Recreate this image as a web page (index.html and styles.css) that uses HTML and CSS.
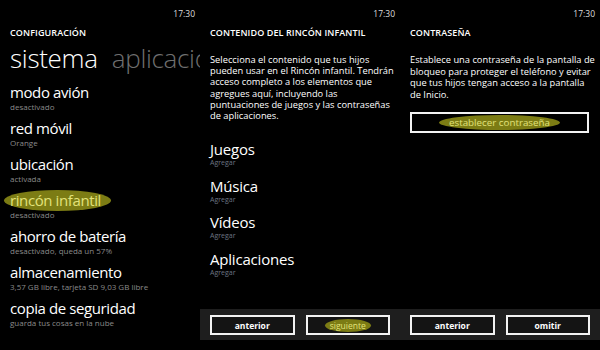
FILE: index.html
```html
<!DOCTYPE html>
<html lang="es">
<head>
<meta charset="utf-8">
<link rel="stylesheet" href="styles.css">
</head>
<body>
<div class="screens">
  <section class="panel">
    <div class="clock">17:30</div>
    <div class="caption">CONFIGURACIÓN</div>
    <div class="pivot"><span class="pivot-on">sistema</span><span class="pivot-off">aplicaciones</span></div>
    <ul class="list">
      <li><div class="title">modo avión</div><div class="sub">desactivado</div></li>
      <li><div class="title">red móvil</div><div class="sub">Orange</div></li>
      <li><div class="title">ubicación</div><div class="sub">activada</div></li>
      <li><div class="title"><span class="mark">rincón infantil</span></div><div class="sub">desactivado</div></li>
      <li><div class="title">ahorro de batería</div><div class="sub">desactivado, queda un 57%</div></li>
      <li><div class="title">almacenamiento</div><div class="sub">3,57 GB libre, tarjeta SD 9,03 GB libre</div></li>
      <li><div class="title">copia de seguridad</div><div class="sub">guarda tus cosas en la nube</div></li>
    </ul>
  </section>

  <section class="panel">
    <div class="clock">17:30</div>
    <div class="caption">CONTENIDO DEL RINCÓN INFANTIL</div>
    <p class="body">Selecciona el contenido que tus hijos<br>pueden usar en el Rincón infantil. Tendrán<br>acceso completo a los elementos que<br>agregues aquí, incluyendo las<br>puntuaciones de juegos y las contraseñas<br>de aplicaciones.</p>
    <ul class="cats">
      <li><div class="cat">Juegos</div><div class="add">Agregar</div></li>
      <li><div class="cat">Música</div><div class="add">Agregar</div></li>
      <li><div class="cat">Vídeos</div><div class="add">Agregar</div></li>
      <li><div class="cat">Aplicaciones</div><div class="add">Agregar</div></li>
    </ul>
    <div class="appbar">
      <button class="btn">anterior</button>
      <button class="btn"><span class="mark mark-sm">siguiente</span></button>
    </div>
  </section>

  <section class="panel">
    <div class="clock">17:30</div>
    <div class="caption">CONTRASEÑA</div>
    <p class="body body-loose">Establece una contraseña de la pantalla de<br>bloqueo para proteger el teléfono y evitar<br>que tus hijos tengan acceso a la pantalla<br>de Inicio.</p>
    <button class="btn btn-wide"><span class="mark mark-md">establecer contraseña</span></button>
    <div class="appbar">
      <button class="btn">anterior</button>
      <button class="btn">omitir</button>
    </div>
  </section>
</div>
</body>
</html>
```

FILE: styles.css
```css
* { box-sizing: border-box; }
html, body {
  margin: 0;
  padding: 0;
  background: #000;
}
body {
  width: 600px;
  height: 350px;
  overflow: hidden;
  font-family: "Open Sans", "Noto Sans", sans-serif;
  color: #fff;
}
.screens {
  display: flex;
  height: 350px;
}
.panel {
  position: relative;
  width: 200px;
  height: 350px;
  overflow: hidden;
  display: flex;
  flex-direction: column;
  padding-left: 10px;
  background: #000;
}
.clock {
  align-self: flex-end;
  padding-right: 5px;
  margin-top: 8px;
  font-size: 8.5px;
  line-height: 12px;
  color: #ddd;
}
.caption {
  margin-top: 7px;
  font-size: 9px;
  font-weight: 600;
  line-height: 12px;
  letter-spacing: 0.1px;
}
.pivot {
  white-space: nowrap;
  overflow: hidden;
  margin-top: 2px;
  margin-right: -10px;
  font-size: 26px;
  font-weight: 300;
  line-height: 34px;
  letter-spacing: -0.3px;
}
.pivot-off {
  margin-left: 14px;
  color: #6f6f6f;
}
.list, .cats {
  list-style: none;
  margin: 0;
  padding: 0;
}
.list { margin-top: 9px; }
.list li {
  height: 36px;
}
.title {
  font-size: 15px;
  line-height: 17px;
  letter-spacing: -0.4px;
  white-space: nowrap;
}
.sub {
  margin-top: 1px;
  font-size: 8px;
  line-height: 9px;
  color: #8a8a8a;
  white-space: nowrap;
}
.mark {
  display: inline-block;
  position: relative;
  color: #e2e27a;
  background: #7c7c14;
  border-radius: 50%;
  padding: 2px 10px 2px 6px;
  margin: -2px 0 -2px -6px;
}
.body {
  margin: 15px 0 0;
  font-size: 9.3px;
  line-height: 11.2px;
  white-space: nowrap;
  color: #fff;
}
.body-loose { line-height: 11.7px; }
.cats { margin-top: 20px; }
.cats li { height: 36.5px; }
.cat {
  font-size: 15px;
  line-height: 17px;
  letter-spacing: -0.2px;
}
.add {
  margin-top: 1px;
  font-size: 7px;
  line-height: 8px;
  color: #6c7482;
}
.appbar {
  position: absolute;
  left: 0;
  right: 0;
  top: 309px;
  height: 31px;
  background: #1e1e1e;
  display: flex;
  gap: 11px;
  padding: 6px 10px 0;
}
.btn {
  width: 85px;
  height: 20px;
  border: 2px solid #f2f2f2;
  background: #141414;
  color: #fff;
  font-family: inherit;
  font-size: 8.5px;
  font-weight: 700;
  padding: 0;
  display: flex;
  align-items: center;
  justify-content: center;
}
.btn-wide {
  width: 179px;
  height: 21px;
  margin-top: 11px;
  background: #000;
  font-weight: 400;
  font-size: 9.8px;
}
.mark-sm {
  margin: 0;
  padding: 1px 5px;
  font-weight: 400;
}
.mark-md {
  margin: 0;
  padding: 1px 10px;
}
```
